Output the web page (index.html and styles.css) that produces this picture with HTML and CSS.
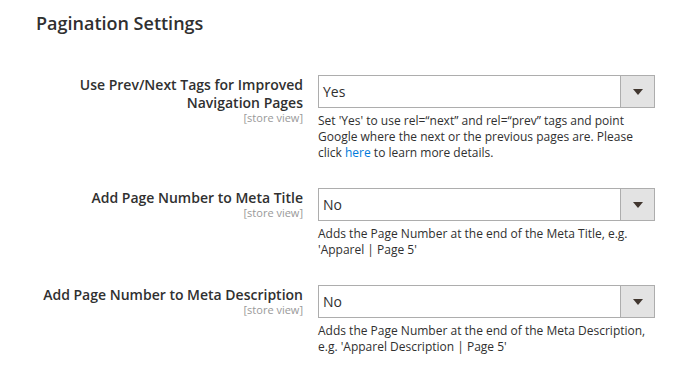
FILE: index.html
```html
<!DOCTYPE html>
<html>
<head>
  <title>Pagination Settings</title>
  <link rel="stylesheet" href="styles.css">
</head>
<body>
  <div class="section">
    <h2 class="section-title">Pagination Settings</h2>

    <div class="field">
      <div class="field-label">
        <label for="use-prev-next">Use Prev/Next Tags for Improved Navigation Pages</label>
        <span class="scope">[store view]</span>
      </div>
      <div class="field-control">
        <div class="select">
          <span class="select-value" id="use-prev-next">Yes</span>
          <span class="select-btn"><span class="arrow"></span></span>
        </div>
        <p class="note">Set 'Yes' to use rel=“next” and rel=“prev” tags and point Google where the next or the previous pages are. Please click <a href="#">here</a> to learn more details.</p>
      </div>
    </div>

    <div class="field">
      <div class="field-label">
        <label for="meta-title">Add Page Number to Meta Title</label>
        <span class="scope">[store view]</span>
      </div>
      <div class="field-control">
        <div class="select">
          <span class="select-value" id="meta-title">No</span>
          <span class="select-btn"><span class="arrow"></span></span>
        </div>
        <p class="note">Adds the Page Number at the end of the Meta Title, e.g. 'Apparel | Page 5'</p>
      </div>
    </div>

    <div class="field">
      <div class="field-label">
        <label for="meta-desc">Add Page Number to Meta Description</label>
        <span class="scope">[store view]</span>
      </div>
      <div class="field-control">
        <div class="select">
          <span class="select-value" id="meta-desc">No</span>
          <span class="select-btn"><span class="arrow"></span></span>
        </div>
        <p class="note">Adds the Page Number at the end of the Meta Description, e.g. 'Apparel Description | Page 5'</p>
      </div>
    </div>
  </div>
</body>
</html>
```

FILE: styles.css
```css
body {
  font-family: "Open Sans", Arial, sans-serif;
  background-color: #fff;
  color: #303030;
  margin: 0;
  padding: 0;
}

.section {
  padding: 11px 0 0 36px;
}

.section-title {
  margin: 0 0 40px;
  font-size: 18px;
  line-height: 24px;
  font-weight: 600;
  color: #303030;
}

.field {
  display: grid;
  grid-template-columns: 267px 337px;
  column-gap: 15px;
  margin-bottom: 27px;
}

.field-label {
  text-align: right;
  padding-top: 1px;
}

.field-label label {
  display: block;
  font-size: 14px;
  line-height: 18px;
  font-weight: 600;
}

.scope {
  display: block;
  font-size: 11px;
  line-height: 12px;
  color: #999;
}

.select {
  display: flex;
  height: 33px;
  box-sizing: border-box;
  border: 1px solid #adadad;
  background-color: #fff;
}

.select-value {
  flex: 1;
  padding-left: 4px;
  font-size: 14px;
  line-height: 31px;
}

.select-btn {
  width: 33px;
  background-color: #e3e3e3;
  border-left: 1px solid #adadad;
  display: flex;
  align-items: center;
  justify-content: center;
}

.arrow {
  width: 0;
  height: 0;
  border-left: 5px solid transparent;
  border-right: 5px solid transparent;
  border-top: 6px solid #41362f;
}

.note {
  margin: 5px 0 0;
  font-size: 12px;
  line-height: 16px;
}

.note a {
  color: #007bdb;
  text-decoration: none;
}
```
